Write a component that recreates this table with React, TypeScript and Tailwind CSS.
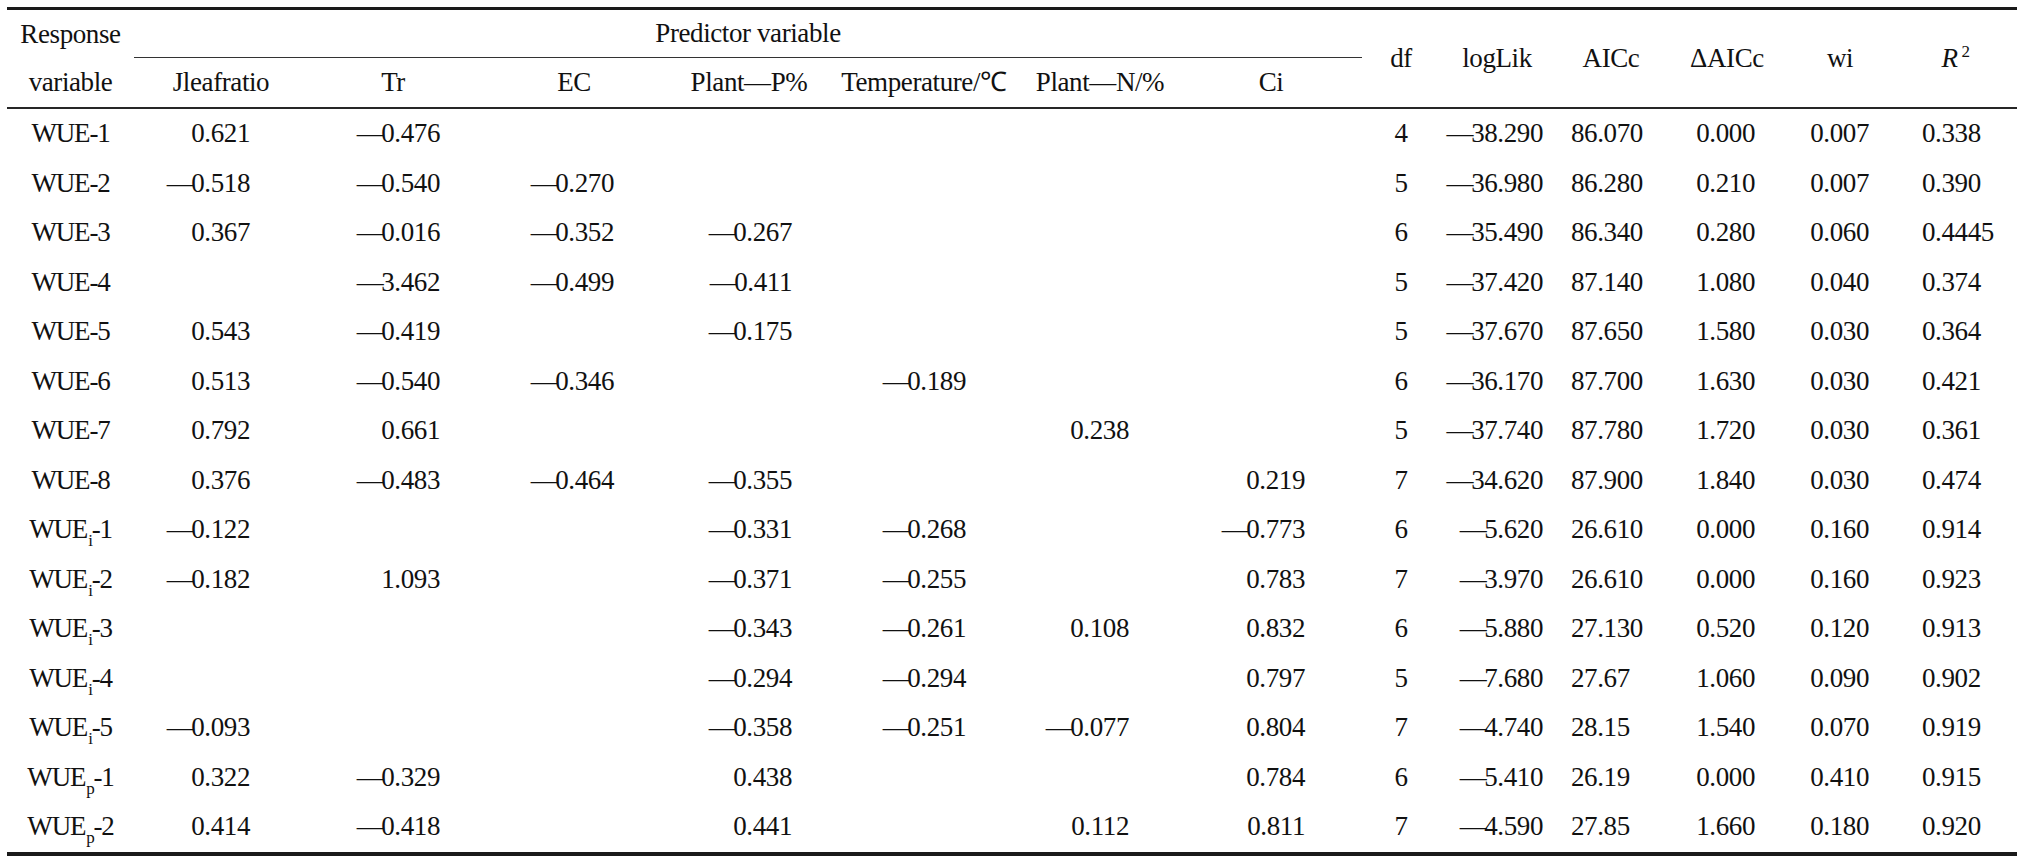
import React from "react";

const COLS =
  "grid grid-cols-[127px_174px_170px_192px_158px_192px_160px_182px_78px_114px_114px_118px_108px_123px]";

const dataCls = [
  "justify-center",
  "justify-end pr-[58px]",
  "justify-end pr-[38px]",
  "justify-end pr-[56px]",
  "justify-end pr-[36px]",
  "justify-end pr-[54px]",
  "justify-end pr-[51px]",
  "justify-end pr-[57px]",
  "justify-center",
  "justify-end pr-[11px]",
  "justify-start pl-[17px]",
  "justify-end pr-[31px]",
  "justify-end pr-[25px]",
  "justify-start pl-[28px]",
];

type Row = { base: string; sub?: string; num: string; v: string[] };

const rows: Row[] = [
  { base: "WUE", num: "1", v: ["0.621", "-0.476", "", "", "", "", "", "4", "-38.290", "86.070", "0.000", "0.007", "0.338"] },
  { base: "WUE", num: "2", v: ["-0.518", "-0.540", "-0.270", "", "", "", "", "5", "-36.980", "86.280", "0.210", "0.007", "0.390"] },
  { base: "WUE", num: "3", v: ["0.367", "-0.016", "-0.352", "-0.267", "", "", "", "6", "-35.490", "86.340", "0.280", "0.060", "0.4445"] },
  { base: "WUE", num: "4", v: ["", "-3.462", "-0.499", "-0.411", "", "", "", "5", "-37.420", "87.140", "1.080", "0.040", "0.374"] },
  { base: "WUE", num: "5", v: ["0.543", "-0.419", "", "-0.175", "", "", "", "5", "-37.670", "87.650", "1.580", "0.030", "0.364"] },
  { base: "WUE", num: "6", v: ["0.513", "-0.540", "-0.346", "", "-0.189", "", "", "6", "-36.170", "87.700", "1.630", "0.030", "0.421"] },
  { base: "WUE", num: "7", v: ["0.792", "0.661", "", "", "", "0.238", "", "5", "-37.740", "87.780", "1.720", "0.030", "0.361"] },
  { base: "WUE", num: "8", v: ["0.376", "-0.483", "-0.464", "-0.355", "", "", "0.219", "7", "-34.620", "87.900", "1.840", "0.030", "0.474"] },
  { base: "WUE", sub: "i", num: "1", v: ["-0.122", "", "", "-0.331", "-0.268", "", "-0.773", "6", "-5.620", "26.610", "0.000", "0.160", "0.914"] },
  { base: "WUE", sub: "i", num: "2", v: ["-0.182", "1.093", "", "-0.371", "-0.255", "", "0.783", "7", "-3.970", "26.610", "0.000", "0.160", "0.923"] },
  { base: "WUE", sub: "i", num: "3", v: ["", "", "", "-0.343", "-0.261", "0.108", "0.832", "6", "-5.880", "27.130", "0.520", "0.120", "0.913"] },
  { base: "WUE", sub: "i", num: "4", v: ["", "", "", "-0.294", "-0.294", "", "0.797", "5", "-7.680", "27.67", "1.060", "0.090", "0.902"] },
  { base: "WUE", sub: "i", num: "5", v: ["-0.093", "", "", "-0.358", "-0.251", "-0.077", "0.804", "7", "-4.740", "28.15", "1.540", "0.070", "0.919"] },
  { base: "WUE", sub: "p", num: "1", v: ["0.322", "-0.329", "", "0.438", "", "", "0.784", "6", "-5.410", "26.19", "0.000", "0.410", "0.915"] },
  { base: "WUE", sub: "p", num: "2", v: ["0.414", "-0.418", "", "0.441", "", "0.112", "0.811", "7", "-4.590", "27.85", "1.660", "0.180", "0.920"] },
];

function Num({ s }: { s: string }) {
  if (!s) return null;
  if (s.startsWith("-")) {
    return (
      <span>
        <span className="mr-[-2px]">—</span>
        {s.slice(1)}
      </span>
    );
  }
  return <span>{s}</span>;
}

function Label({ r }: { r: Row }) {
  return (
    <span className="tracking-[-1.2px]">
      {r.base}
      {r.sub && <span className="text-[17px] relative top-[8px] ml-[1px]">{r.sub}</span>}
      -{r.num}
    </span>
  );
}

export default function App() {
  const hdr2 = ["Jleafratio", "Tr", "EC", "Plant—P%", "Temperature/℃", "Plant—N/%", "Ci"];
  return (
    <div className="w-[2032px] h-[864px] bg-white font-serif">
      <div className="w-[2032px] h-[864px] px-[7px] pt-[7px] text-[27px] leading-none text-[#111] tracking-[-0.4px] font-['Liberation_Serif']">
        <div className="w-[2010px] border-t-[3px] border-b-[4px] border-[#1a1a1a]">
          <div className={`${COLS} border-b-2 border-[#262626]`}>
            <div className="h-[48px] flex items-center justify-center">Response</div>
            <div className="col-span-7 h-[48px] border-b-[1.5px] border-[#333] flex items-center justify-center">
              Predictor variable
            </div>
            <div className="row-span-2 flex items-center justify-center">df</div>
            <div className="row-span-2 flex items-center justify-center">logLik</div>
            <div className="row-span-2 flex items-center justify-center">AICc</div>
            <div className="row-span-2 flex items-center justify-center">ΔAICc</div>
            <div className="row-span-2 flex items-center justify-center">wi</div>
            <div className="row-span-2 flex items-center justify-center">
              <span>
                <span className="italic">R</span>
                <span className="text-[17px] relative -top-[10px] ml-[4px]">2</span>
              </span>
            </div>
            <div className="h-[49px] flex items-center justify-center">variable</div>
            {hdr2.map((h, i) => (
              <div key={i} className="h-[49px] flex items-center justify-center">
                {h}
              </div>
            ))}
          </div>
          {rows.map((r, ri) => (
            <div key={ri} className={`${COLS} h-[49.5px]`}>
              <div className={`flex items-center ${dataCls[0]}`}>
                <Label r={r} />
              </div>
              {r.v.map((s, ci) => (
                <div key={ci} className={`flex items-center ${dataCls[ci + 1]}`}>
                  <Num s={s} />
                </div>
              ))}
            </div>
          ))}
        </div>
      </div>
    </div>
  );
}
